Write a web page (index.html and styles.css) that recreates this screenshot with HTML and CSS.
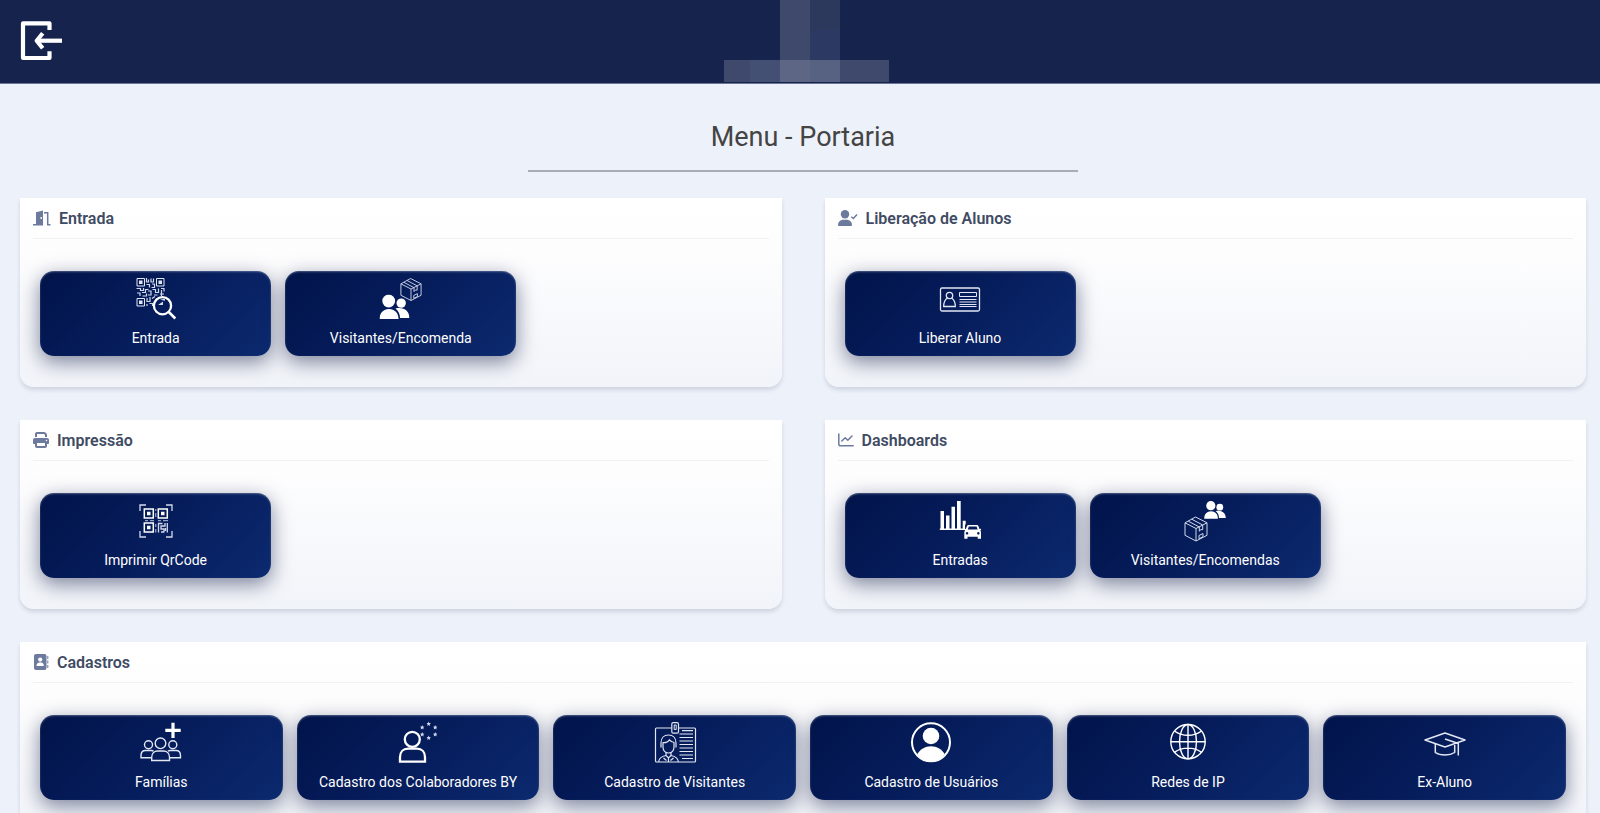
FILE: index.html
```html
<!DOCTYPE html>
<html lang="pt-BR">
<head>
  <meta charset="UTF-8">
  <meta name="viewport" content="width=device-width, initial-scale=1">
  <title>Menu - Portaria</title>
  <link rel="stylesheet" href="styles.css">
</head>
<body>

  <!-- Desenhos usados em mais de um botão -->
  <svg class="sprite" aria-hidden="true">
    <symbol id="pessoas" viewBox="0 0 30 25">
      <g fill="#fff">
        <circle cx="21.7" cy="8.6" r="4.7"/>
        <path d="M16 13.9c8-2 14 2.500 14 9.600H20.500c0-4-1.500-7.200-4.500-9.600z"/>
        <circle cx="9.200" cy="6.500" r="6.400"/>
        <path d="M0 24.600c0-6 3.800-10.200 9.500-10.200S19 18.600 19 24.600z"/>
      </g>
    </symbol>
    <symbol id="caixa" viewBox="0 0 24 26">
      <g fill="none" stroke="#d3d9ec" stroke-width="1" stroke-linejoin="round">
        <path d="M11.500 1L23 6.800v12.500L12 25 1 19.300V6.800z"/>
        <path d="M1 6.800l11 5.700 11-5.700M12 12.500V25M4.300 5.200l11 5.800M7.700 3.200l11 5.800M15.300 11v4.200l1.700-1.700 1.700.2V9"/>
        <path d="M15 19.500l4-2v3.200l-4 2z"/>
      </g>
    </symbol>
  </svg>

  <header class="topbar">
    <a href="#" class="exit" aria-label="Sair">
      <svg width="42" height="42" viewBox="0 1 42 42" fill="none" stroke="#fff" stroke-width="4.200">
        <path d="M29.500 10V3.400H3V38h26.500v-6.700" stroke-linejoin="round"/>
        <path d="M42 20.700H18"/>
        <path d="M22.700 13.200l-6 7.500 6 7.500" stroke-linejoin="round"/>
      </svg>
    </a>
    <svg class="logo" width="165" height="83" viewBox="0 0 165 83" aria-hidden="true">
      <rect x="56" y="0" width="30" height="60" fill="#3e496b"/>
      <rect x="86" y="0" width="30" height="30" fill="#2c385c"/>
      <rect x="86" y="30" width="30" height="30" fill="#2c3963"/>
      <rect x="0" y="60" width="26" height="22" fill="#3e496b"/>
      <rect x="26" y="60" width="30" height="22" fill="#445073"/>
      <rect x="56" y="60" width="30" height="22" fill="#5d6785"/>
      <rect x="86" y="60" width="30" height="22" fill="#576181"/>
      <rect x="116" y="60" width="49" height="22" fill="#3e496c"/>
    </svg>
  </header>

  <main class="content">
    <h1 class="title">Menu - Portaria</h1>

    <div class="cards">

      <!-- Entrada -->
      <section class="card">
        <h2 class="card-title">
          <svg width="18" height="16" viewBox="0 0 18 16">
            <path d="M3 2.200L10 .5V15.500H0V14h3z"/>
            <path d="M11 2.700h3.700V14.700H17.500" fill="none" stroke="#6c7a9d" stroke-width="1.500"/>
            <circle cx="8.200" cy="8" r="0.900" fill="#fff"/>
          </svg>
          Entrada
        </h2>
        <div class="buttons">
          <button type="button" class="menu-button">
            <svg class="icon" viewBox="0 0 42 42">
              <g fill="none" stroke="#e3e7f3" stroke-width="1">
                <path d="M2 .5h7.500V8H2zM21.500 .5H29V8h-7.500zM2 20.500h7.500V28H2z"/>
              </g>
              <path fill="#e3e7f3" d="M4 2.500h3.500V6H4zM23.500 2.500H27V6h-3.500zM4 22.500h3.500V26H4z"/>
              <path fill="none" stroke="#d3d9ec" stroke-width="1.200" d="M11.500 0v4h2V1.500M16 .5v3.500h2.500V.5M11.500 6.500h3v3M17 6h2.500v3.500h-3M1.500 10.500h4v2h3v-2.500M2 15h3v3M7 14.500h3.500v-3h3M7.500 18h4v-2.500M13 13h3v4h-3M17.500 11.500h3v3h3v-4M26 10.500h3v3M25 16h4M19 17h3.500M12 20v3.500h3V19M12 26v2M14.500 25.500h3v2.500M17 20.500l3-2M26.500 12v6"/>
              <circle cx="27.500" cy="27.700" r="8.600" fill="#061b59" stroke="#fff" stroke-width="2.300"/>
              <path d="M33.800 34l6.500 6.500" stroke="#fff" stroke-width="2.600"/>
              <path d="M23 27l5-3.500V27zM25 21.500l5-.8v2z" fill="#d3d9ec"/>
            </svg>
            Entrada
          </button>
          <button type="button" class="menu-button">
            <svg class="icon" viewBox="0 0 42 42">
              <use href="#caixa" x="20" y="-0.500" width="22" height="24"/>
              <use href="#pessoas" x="-0.500" y="16.500" width="30" height="25"/>
            </svg>
            Visitantes/Encomenda
          </button>
        </div>
      </section>

      <!-- Liberação de Alunos -->
      <section class="card">
        <h2 class="card-title">
          <svg width="20" height="16" viewBox="0 0 20 16">
            <circle cx="7" cy="4.300" r="4.200"/>
            <path d="M0 15c0-3.200 2.500-5.300 5.500-5.300h3c3 0 5.500 2.100 5.500 5.300 0 .5-.4.900-.9.900H.9c-.5 0-.9-.4-.9-.9z"/>
            <path d="M13.300 6.800l2 1.700 3.700-4" fill="none" stroke="#6c7a9d" stroke-width="1.500"/>
          </svg>
          Liberação de Alunos
        </h2>
        <div class="buttons">
          <button type="button" class="menu-button">
            <svg class="icon" viewBox="0 0 42 42">
              <g fill="none" stroke="#e3e7f3" stroke-width="1.300">
                <rect x="1.500" y="10" width="39" height="23" rx="1.500"/>
                <circle cx="10.500" cy="17.500" r="3.200"/>
                <path d="M8.500 20c-2.500 1.500-3.800 4-3.800 8.500h11.600c0-4.500-1.300-7-3.800-8.500"/>
                <path d="M20.500 14.500h17v4h-17zM20.500 21.500h17M20.500 24h17M20.500 26.500h17M20.500 28.500h17" stroke-width="1"/>
              </g>
            </svg>
            Liberar Aluno
          </button>
        </div>
      </section>

      <!-- Impressão -->
      <section class="card">
        <h2 class="card-title">
          <svg width="16" height="16" viewBox="0 0 512 512">
            <path d="M128 0C92.700 0 64 28.700 64 64v96h64V64h226.700L384 93.300V160h64V93.300c0-17-6.700-33.300-18.700-45.300L400 18.700C388 6.700 371.700 0 354.700 0H128zM384 352v96H128v-96h256zm64 32h32c17.700 0 32-14.300 32-32v-96c0-35.300-28.700-64-64-64H64c-35.300 0-64 28.700-64 64v96c0 17.700 14.300 32 32 32h32v64c0 35.300 28.700 64 64 64h256c35.300 0 64-28.700 64-64v-64zM432 248a24 24 0 1 1 0 48 24 24 0 1 1 0-48z"/>
          </svg>
          Impressão
        </h2>
        <div class="buttons">
          <button type="button" class="menu-button">
            <svg class="icon" viewBox="0 0 42 42">
              <g fill="none" stroke="#d3d9ec" stroke-width="1.300">
                <path d="M5 11V5h6M31 5h6v6M5 31v6h6M37 31v6h-6"/>
                <path d="M9.300 9h9v9h-9zM23.300 9h9v9h-9zM9.300 23h9v9h-9z" stroke="#fff" stroke-width="1.500"/>
                <path d="M20.800 9v2M20.800 13v4M10 20.700h3M15 20.700h4M23 20.700h3M28 20.700h5M20.800 24v3M20.800 29v3.500" stroke-width="0.900"/>
                <path d="M23.500 32.500v-9h4M30 23v3h-4v3h3v3.500M32.300 23v9.500M26 32h3M30.500 28v3"/>
              </g>
              <path fill="#fff" d="M12 11.700h3.500v3.500H12zM26 11.700h3.500v3.500H26zM12 25.700h3.500v3.500H12z"/>
            </svg>
            Imprimir QrCode
          </button>
        </div>
      </section>

      <!-- Dashboards -->
      <section class="card">
        <h2 class="card-title">
          <svg width="16" height="16" viewBox="0 0 16 16">
            <g fill="none" stroke="#6c7a9d" stroke-linecap="round" stroke-linejoin="round">
              <path d="M.8 2v10c0 1.200.5 1.800 1.700 1.800h12.700" stroke-width="1.500"/>
              <path d="M3.800 9l3.400-3.300L9.800 8.300 14 4" stroke-width="1.500"/>
            </g>
          </svg>
          Dashboards
        </h2>
        <div class="buttons">
          <button type="button" class="menu-button">
            <svg class="icon" viewBox="0 0 42 42">
              <path fill="#fff" d="M1.500 11h3.500v18H1.500zM7 15.500h3.500v14H7zM12.500 6.700h3.500V29h-3.500zM18 1h3.700v28H18zM23.700 20.700h3V29h-3zM.8 28.500h25.500V30H.8z"/>
              <path fill="#061c5a" d="M26 24.500h15v6H26z"/>
              <path fill="#fff" fill-rule="evenodd" d="M29.500 25h8.300c1 0 1.500.6 1.800 1.500l.9 2.500 1.500-.3v1.400l-.7.300c.6.600.7 1.200.7 2v6.300h-3.300v-2H28.500v2h-3.200v-6.300c0-.8.200-1.400.8-2l-.8-.3v-1.400l1.500.3 1-2.500c.3-.9.700-1.500 1.700-1.500zM29.800 26.400l-1 3.100h9.800l-1-3.100zM28 32a1.300 1.300 0 1 0 .1 0zM39.300 32a1.300 1.300 0 1 0 .1 0z"/>
            </svg>
            Entradas
          </button>
          <button type="button" class="menu-button">
            <svg class="icon" viewBox="0 0 42 42">
              <use href="#caixa" x="0" y="16" width="24" height="26"/>
              <use href="#pessoas" x="20" y="1" width="22" height="18"/>
            </svg>
            Visitantes/Encomendas
          </button>
        </div>
      </section>

      <!-- Cadastros -->
      <section class="card card-wide">
        <h2 class="card-title">
          <svg width="16" height="16" viewBox="0 0 16 16">
            <rect x="1" y="0" width="12.500" height="16" rx="2"/>
            <path d="M14.300 2h1v3h-1zM14.300 6.500h1v3h-1zM14.300 11h1v3h-1z"/>
            <circle cx="7.200" cy="5.600" r="2.100" fill="#fff"/>
            <path d="M3.500 12c0-2 1.200-3.500 2.900-3.500H8c1.700 0 2.900 1.500 2.900 3.500z" fill="#fff"/>
          </svg>
          Cadastros
        </h2>
        <div class="buttons">
          <button type="button" class="menu-button">
            <svg class="icon" viewBox="0 0 42 42">
              <path d="M33 .700V16M25.300 8.300H40.700" stroke="#fff" stroke-width="3.200"/>
              <g fill="none" stroke="#e3e7f3" stroke-width="1.400">
                <circle cx="20.500" cy="21.300" r="5.300"/>
                <circle cx="8.500" cy="22.800" r="4"/>
                <circle cx="32.800" cy="22.800" r="4"/>
                <path d="M11.700 38.500v-3.300c0-3.800 2.500-6.200 6-6.200h5.800c3.500 0 6 2.400 6 6.200v3.300z"/>
                <path d="M11.500 35.800H1v-2.300c0-3.300 2-5 4.500-5h6c1 0 1.500.3 2 .700M29.500 35.800H40.500v-2.300c0-3.300-2-5-4.500-5h-6c-1 0-1.500.3-2 .700"/>
              </g>
            </svg>
            Famílias
          </button>
          <button type="button" class="menu-button">
            <svg class="icon" viewBox="0 0 42 42">
              <g fill="none" stroke="#fff" stroke-width="2.300">
                <circle cx="15.300" cy="17.300" r="7.500"/>
                <path d="M3 39.700v-4.500c0-5.200 3.200-8.500 8-8.500h9c4.800 0 8 3.300 8 8.500v4.500z"/>
              </g>
              <g fill="#d3d9ec">
                <path id="estrela" d="M31.700 -.500l.6 1.500 1.600.2-1.100 1.100.3 1.600-1.400-.8-1.400.8.300-1.600-1.100-1.100 1.600-.2z"/>
                <use href="#estrela" x="6.500" y="3.500"/>
                <use href="#estrela" x="6.500" y="10.500"/>
                <use href="#estrela" y="14"/>
                <use href="#estrela" x="-6.500" y="10.500"/>
                <use href="#estrela" x="-6.500" y="3.500"/>
              </g>
            </svg>
            Cadastro dos Colaboradores BY
          </button>
          <button type="button" class="menu-button">
            <svg class="icon" viewBox="0 0 42 42">
              <g fill="none" stroke="#e3e7f3" stroke-width="1.200">
                <path d="M17.500 6H2.500c-.6 0-1 .4-1 1v32c0 .6.400 1 1 1h38c.6 0 1-.4 1-1V7c0-.6-.4-1-1-1H25"/>
                <rect x="17.800" y="0.700" width="6.700" height="10.500" rx="1.500"/>
                <path d="M20.200 3h2v4.500h-2z" stroke-width="1"/>
                <path d="M7 25.500V21c0-4.800 3-8 7.500-8s7.500 3.200 7.500 8v4.500"/>
                <path d="M8.500 20.500c3 .5 5.500-.5 7-2.700 1.200 1.700 2.800 2.700 5 2.700M9 20.500V25c0 3.500 2.300 6 5.500 6s5.500-2.500 5.500-6v-4.500"/>
                <path d="M12 30.500v3l2.500 2.500 2.500-2.500v-3M12 33.500c-4.500.8-7 2.500-7.500 6.500M17 33.500c4.500.8 7 2.500 7.500 6.500M14.500 36v4M9.500 36l3 2.500M19.500 36l-3 2.500"/>
                <path d="M28 8.700h11M25.500 12h13.500M25.500 15.500H39M25.500 19H39M25.500 22.500H39M25.500 26H39M25.500 29.500H39M25.500 33H39M28 36.500h11" stroke-width="1.200"/>
              </g>
            </svg>
            Cadastro de Visitantes
          </button>
          <button type="button" class="menu-button">
            <svg class="icon" viewBox="0 0 42 42">
              <circle cx="21" cy="20.300" r="19" fill="none" stroke="#fff" stroke-width="2"/>
              <circle cx="21" cy="14" r="8.300" fill="#fff"/>
              <path d="M7.300 32.300C10 27.500 15 24.300 21 24.300s11 3.200 13.700 8C31.500 36.500 26.500 39 21 39S10.500 36.500 7.300 32.300z" fill="#fff"/>
            </svg>
            Cadastro de Usuários
          </button>
          <button type="button" class="menu-button">
            <svg class="icon" viewBox="0 0 42 42">
              <g fill="none" stroke="#fff" stroke-width="1.400">
                <circle cx="21" cy="19.700" r="17.200"/>
                <ellipse cx="21" cy="19.700" rx="8.500" ry="17.200"/>
                <path d="M21 2.500v34.400M3.800 19.700h34.400M7.500 9c3.500 2.700 8 4.300 13.500 4.300S31 11.700 34.500 9M7.500 30.400c3.500-2.700 8-4.300 13.500-4.300s10 1.600 13.500 4.300"/>
              </g>
            </svg>
            Redes de IP
          </button>
          <button type="button" class="menu-button">
            <svg class="icon" viewBox="0 0 42 42">
              <g fill="none" stroke="#e3e7f3" stroke-width="1.500" stroke-linejoin="round">
                <path d="M21 11L41 18l-20 7L1 18z"/>
                <path d="M11.300 22v8.500c2.700 1.800 6 2.500 9.700 2.500s7-.7 9.700-2.500V23"/>
                <path d="M21 17l13.300 4.500V33.500"/>
              </g>
            </svg>
            Ex-Aluno
          </button>
        </div>
      </section>

    </div>
  </main>

</body>
</html>
```

FILE: styles.css
```css
* {
  box-sizing: border-box;
  margin: 0;
  padding: 0;
}

body {
  font-family: Roboto, 'Liberation Sans', sans-serif;
  background-color: #edf1fa;
  color: #444;
}

.sprite {
  position: absolute;
  width: 0;
  height: 0;
}

.topbar {
  display: grid;
  grid-template-columns: 1fr auto 1fr;
  align-items: center;
  height: 84px;
  padding: 0 8px 0 20px;
  background-color: #16244d;
  border-bottom: 1px solid #6b7698;
}

.exit {
  justify-self: start;
}

.exit svg,
.logo {
  display: block;
}

.content {
  padding: 34px 14px 32px 20px;
}

.title {
  width: 550px;
  max-width: 100%;
  margin: 0 auto 26px;
  padding-bottom: 14px;
  border-bottom: 2px solid #a9acb1;
  font-size: 27px;
  font-weight: 400;
  line-height: 38px;
  text-align: center;
}

.cards {
  display: grid;
  grid-template-columns: 1fr 1fr;
  gap: 33px 43px;
}

.card {
  padding: 0 13px 31px;
  background: linear-gradient(180deg, #fff 0%, #fdfdfe 30%, #f1f4f9 100%);
  border-radius: 0 0 14px 14px;
  box-shadow: 0 3px 4px rgba(30, 40, 70, 0.14);
}

.card-wide {
  grid-column: 1 / -1;
}

.card-title {
  display: flex;
  align-items: center;
  gap: 8px;
  height: 41px;
  border-bottom: 1px solid #eff2f5;
  color: #3f4b63;
  font-size: 16px;
  font-weight: 600;
}

.card-title svg {
  fill: #6c7a9d;
}

.buttons {
  display: grid;
  grid-template-columns: repeat(3, 1fr);
  gap: 14px;
  padding: 32px 7px 0;
}

.card-wide .buttons {
  grid-template-columns: repeat(6, 1fr);
}

.menu-button {
  display: flex;
  flex-direction: column;
  align-items: center;
  gap: 9px;
  height: 85px;
  padding-top: 7px;
  border: none;
  border-radius: 14px;
  background: linear-gradient(135deg, #01134a 0%, #061d5c 50%, #0c2a6f 100%);
  box-shadow: 0 6px 20px rgba(5, 15, 60, 0.5), inset 0 1px 2px rgba(255, 255, 255, 0.3);
  color: #fff;
  font-family: inherit;
  font-size: 14px;
  font-weight: 400;
  line-height: 18px;
  cursor: pointer;
}

.menu-button:hover {
  background: #0c2a6f;
}

.icon {
  width: 42px;
  height: 42px;
  overflow: visible;
}

@media (max-width: 1000px) {
  .cards {
    grid-template-columns: 1fr;
  }

  .card-wide .buttons {
    grid-template-columns: repeat(3, 1fr);
  }
}
```
